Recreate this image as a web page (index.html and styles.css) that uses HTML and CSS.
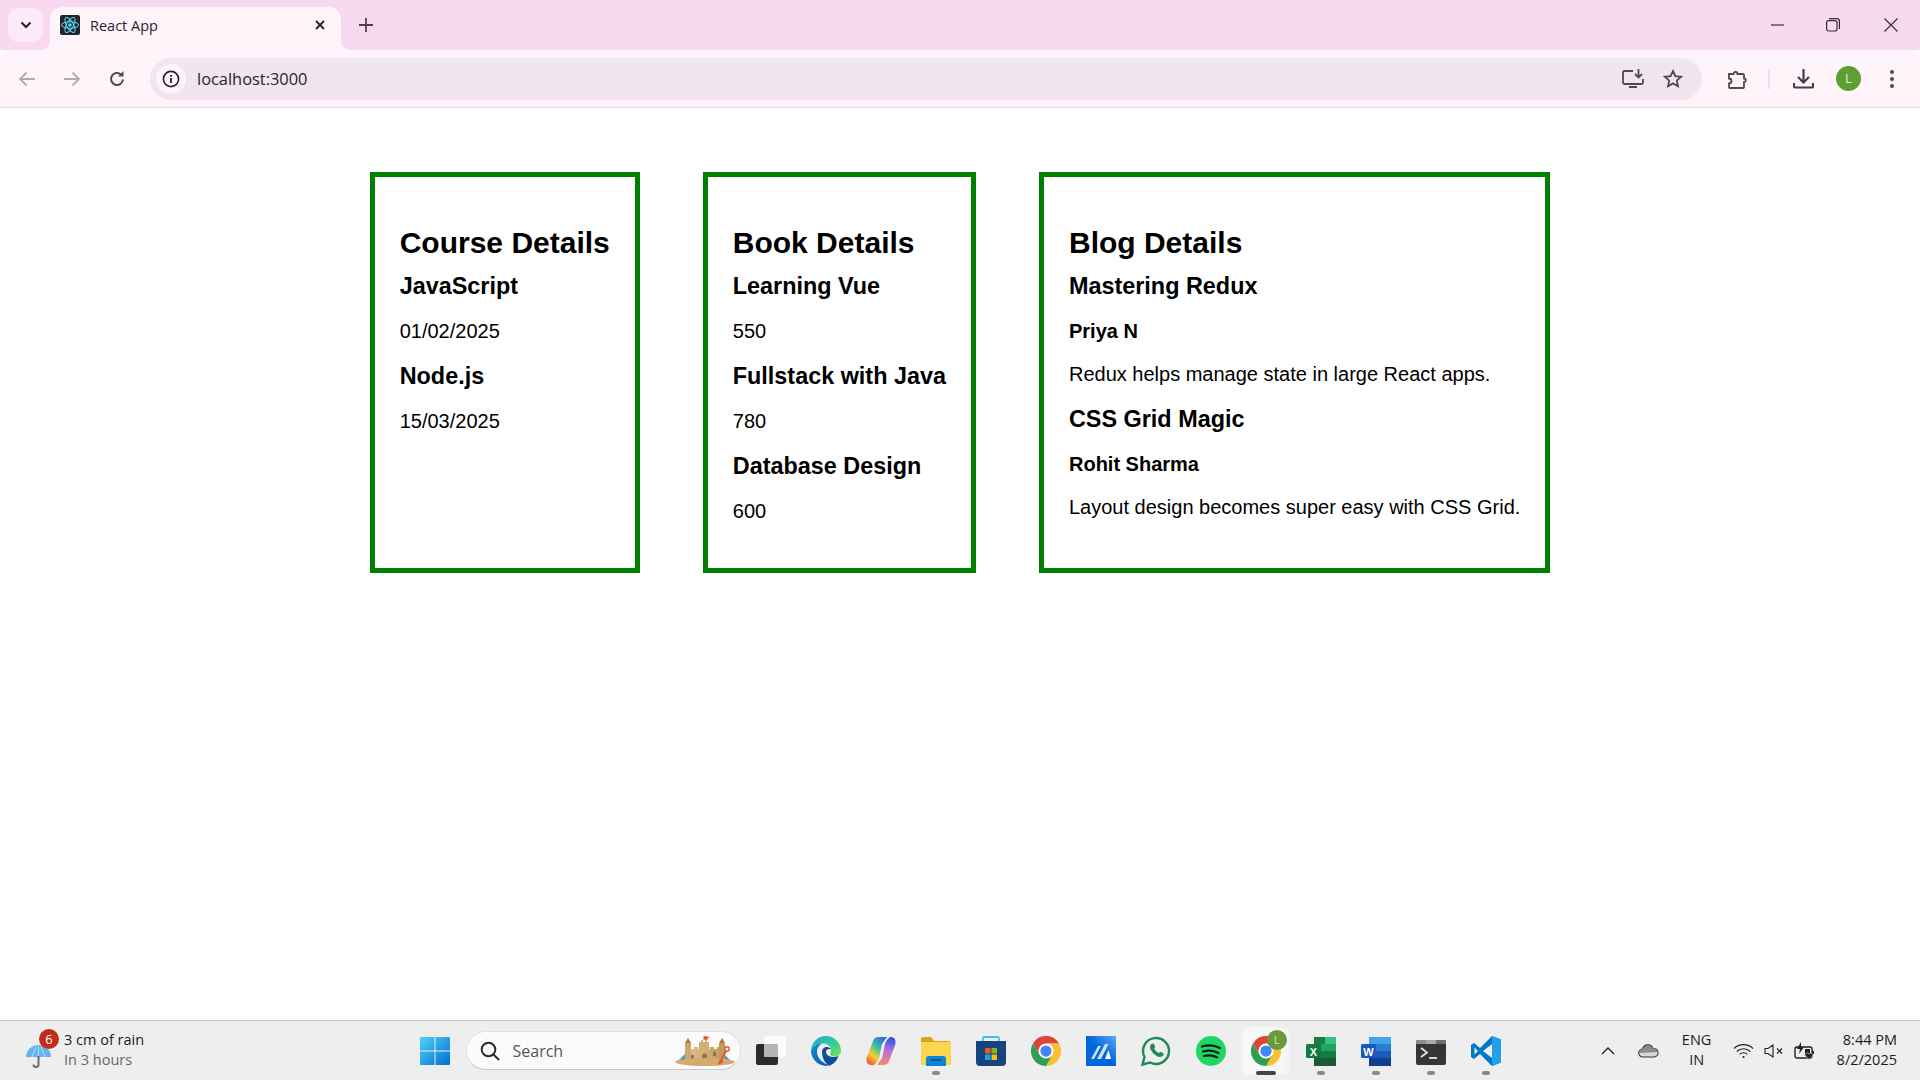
FILE: index.html

```html
<!DOCTYPE html>
<html lang="en">
<head>
  <meta charset="UTF-8" />
  <title>React App</title>
  <link rel="stylesheet" href="styles.css">
</head>
<body>
  <svg class="defs" width="0" height="0">
    <symbol id="chrome" viewBox="0 0 48 48">
      <path fill="#db4437" d="M3.2 12A24 24 0 0 1 44.8 12H24A12 12 0 0 0 13.6 30Z"/>
      <path fill="#fbc02d" d="M44.8 12A24 24 0 0 1 24 48L34.4 30A12 12 0 0 0 24 12Z"/>
      <path fill="#2e9e4f" d="M24 48A24 24 0 0 1 3.2 12L13.6 30A12 12 0 0 0 34.4 30Z"/>
      <circle cx="24" cy="24" r="11.5" fill="#fff"/>
      <circle cx="24" cy="24" r="9" fill="#4285f4"/>
    </symbol>
  </svg>

  <!-- tab strip -->
  <div class="tabstrip">
    <div class="tab-search">
      <svg width="12" height="8" viewBox="0 0 12 8"><path d="M1.5 1.5 6 6l4.500-4.500" fill="none" stroke="#2b1f29" stroke-width="2"/></svg>
    </div>
    <div class="tab">
      <svg class="favicon" width="20" height="20" viewBox="0 0 20 20">
        <rect width="20" height="20" rx="2" fill="#20252b"/>
        <g fill="none" stroke="#61dafb" stroke-width="1">
          <ellipse cx="10" cy="10" rx="8.500" ry="3.300"/>
          <ellipse cx="10" cy="10" rx="8.500" ry="3.300" transform="rotate(60 10 10)"/>
          <ellipse cx="10" cy="10" rx="8.500" ry="3.300" transform="rotate(120 10 10)"/>
        </g>
        <circle cx="10" cy="10" r="1.800" fill="#61dafb"/>
      </svg>
      <span class="tab-title">React App</span>
      <svg class="tab-close" width="10" height="10" viewBox="0 0 10 10"><path d="M1 1l8 8M9 1 1 9" stroke="#2b1f29" stroke-width="1.800"/></svg>
    </div>
    <svg class="new-tab" width="14" height="14" viewBox="0 0 14 14"><path d="M7 0v14M0 7h14" stroke="#4f3f4c" stroke-width="1.800"/></svg>
    <div class="window-btns">
      <svg width="14" height="14" viewBox="0 0 14 14"><path d="M0 7h13" stroke="#3a2d37" stroke-width="1.200"/></svg>
      <svg width="14" height="14" viewBox="0 0 14 14" fill="none" stroke="#3a2d37" stroke-width="1.200"><rect x="0.600" y="2.600" width="10.400" height="10.400" rx="2"/><path d="M3 .6h8a2.400 2.400 0 0 1 2.400 2.400v8"/></svg>
      <svg width="14" height="14" viewBox="0 0 14 14"><path d="M.5.500l13 13M13.500.500l-13 13" stroke="#3a2d37" stroke-width="1.200"/></svg>
    </div>
  </div>

  <!-- address bar -->
  <div class="toolbar">
    <svg class="nav" width="18" height="16" viewBox="0 0 18 16" fill="none" stroke="#b3a9b1" stroke-width="1.800"><path d="M17 8H2M8.500 1.500 2 8l6.500 6.500"/></svg>
    <svg class="nav" width="18" height="16" viewBox="0 0 18 16" fill="none" stroke="#b3a9b1" stroke-width="1.800"><path d="M1 8h15M9.500 1.500 16 8l-6.500 6.500"/></svg>
    <svg class="nav" width="18" height="18" viewBox="0 0 18 18" fill="none" stroke="#54454f" stroke-width="2.100"><path d="M15 9.500A6 6 0 1 1 13 4.500"/><path d="M15.500 1v5.500H10" fill="#54454f" stroke="none"/></svg>
    <div class="omnibox">
      <div class="site-info">
        <svg width="18" height="18" viewBox="0 0 18 18"><circle cx="9" cy="9" r="7.600" fill="none" stroke="#2b1f29" stroke-width="1.600"/><path d="M9 8v5M9 5v1.800" stroke="#2b1f29" stroke-width="1.800"/></svg>
      </div>
      <span class="url">localhost:3000</span>
      <svg class="omni-right" width="22" height="20" viewBox="0 0 22 20" fill="none" stroke="#54454f" stroke-width="1.800"><path d="M11 2H2.500a1.500 1.500 0 0 0-1.500 1.500v10a1.500 1.500 0 0 0 1.500 1.500h17a1.500 1.500 0 0 0 1.500-1.500V10"/><path d="M16.500 0v8M13 5l3.500 3.500L20 5M7 18h8" /></svg>
      <svg class="omni-star" width="20" height="19" viewBox="0 0 20 19" fill="none" stroke="#54454f" stroke-width="1.800"><path d="M10 2l2.400 5.200 5.600.6-4.200 3.800 1.200 5.600L10 14.400l-5 2.800 1.200-5.600L2 7.800l5.600-.6z"/></svg>
    </div>
    <svg class="ext" width="20" height="20" viewBox="0 0 20 20" fill="none" stroke="#54454f" stroke-width="1.800"><path d="M2 5h4.500a2 2 0 0 1 4 0H16a1 1 0 0 1 1 1v3.500a1.800 1.800 0 0 1 0 3.600V18a1 1 0 0 1-1 1H3a1 1 0 0 1-1-1v-3.500a2.500 2.500 0 0 0 0-5z"/></svg>
    <span class="divider"></span>
    <svg class="dl" width="21" height="20" viewBox="0 0 21 20" fill="none" stroke="#4a3a46" stroke-width="2.200"><path d="M10.500 0v13M5 8l5.500 5.500L16 8M1 14v3.500a1 1 0 0 0 1 1h17a1 1 0 0 0 1-1V14"/></svg>
    <div class="avatar">L</div>
    <div class="menu-dots"><i></i><i></i><i></i></div>
  </div>

  <!-- page content -->
  <main class="page">
    <section class="card">
      <h2>Course Details</h2>
      <h3>JavaScript</h3>
      <p>01/02/2025</p>
      <h3>Node.js</h3>
      <p>15/03/2025</p>
    </section>
    <section class="card">
      <h2>Book Details</h2>
      <h3>Learning Vue</h3>
      <p>550</p>
      <h3>Fullstack with Java</h3>
      <p>780</p>
      <h3>Database Design</h3>
      <p>600</p>
    </section>
    <section class="card">
      <h2>Blog Details</h2>
      <h3>Mastering Redux</h3>
      <h4>Priya N</h4>
      <p>Redux helps manage state in large React apps.</p>
      <h3>CSS Grid Magic</h3>
      <h4>Rohit Sharma</h4>
      <p>Layout design becomes super easy with CSS Grid.</p>
    </section>
  </main>

  <!-- windows taskbar -->
  <footer class="taskbar">
    <div class="weather">
      <div class="weather-icon">
        <svg width="25" height="23" viewBox="0 0 25 23"><path d="M0 12A12.500 12 0 0 1 25 12Z" fill="#63b4ee"/><path d="M6 12 10 2M19 12 15 2M12.500 1v11" stroke="#cfe8fa" stroke-width=".8"/><path d="M12.500 11v8.500a2.500 2.500 0 0 1-5 0" fill="none" stroke="#6d6d6d" stroke-width="2"/></svg>
        <span class="badge">6</span>
      </div>
      <div class="weather-text">
        <div>3 cm of rain</div>
        <div class="muted">In 3 hours</div>
      </div>
    </div>

    <div class="task-icons">
      <svg class="ico win" viewBox="0 0 30 30">
        <defs><linearGradient id="wg" x1="0" y1="0" x2="1" y2="1"><stop offset="0" stop-color="#4fd0fb"/><stop offset="1" stop-color="#0070d0"/></linearGradient></defs>
        <path fill="url(#wg)" d="M1 1h13.500v13.500H0V2a1 1 0 0 1 1-1zM15.500 1H29a1 1 0 0 1 1 1v12.500H15.500zM0 15.500h14.500V29H1a1 1 0 0 1-1-1zM15.500 15.500H30V28a1 1 0 0 1-1 1H15.500z"/>
      </svg>

      <div class="search">
        <svg width="20" height="20" viewBox="0 0 20 20" fill="none" stroke="#2a2a2a" stroke-width="2"><circle cx="8.500" cy="8.500" r="6.800"/><path d="M13.500 13.500 19 19"/></svg>
        <span class="search-text">Search</span>
        <svg class="castle" width="60" height="30" viewBox="0 0 60 30">
          <defs><linearGradient id="sand" x1="0" y1="0" x2="1" y2="0"><stop offset="0" stop-color="#e0c28c"/><stop offset="1" stop-color="#c39a5c"/></linearGradient></defs>
          <path d="M3 25 11 17v9z" fill="#3d9bd8"/>
          <path d="M50 19l8 8H48z" fill="#3d9bd8"/>
          <path d="M12 11h4v2h3v-2h4v2h12v-2h4v2h3v-2h4v15H12z" fill="url(#sand)"/>
          <rect x="10" y="7" width="6" height="18" fill="#cda76b"/>
          <rect x="44" y="7" width="6" height="18" fill="#c39a5c"/>
          <path d="M10 7l3-5 3 5zM44 7l3-5 3 5z" fill="#a97f45"/>
          <path d="M24 6h2V4h2v2h2V4h2v2h2v9H24z" fill="#d3ae74"/>
          <path d="M29 4V0" stroke="#a0764a"/>
          <path d="M29 0 35 1 32 2.500 33 4 29 3.500z" fill="#e2542f"/>
          <path d="M27 24v-4a2.500 2.500 0 0 1 5 0v4z" fill="#8d7356"/>
          <path d="M16 20a1.500 1.500 0 0 1 3 0v3h-3z" fill="#8d7356"/>
          <path d="M38 17a1.500 1.500 0 0 1 3 0v3h-3z" fill="#8d7356"/>
          <ellipse cx="30" cy="26" rx="30" ry="4" fill="#d4ab6c"/>
          <path d="M44 28 51 15" stroke="#e2542f" stroke-width="1.800"/>
          <circle cx="52" cy="13" r="2.200" fill="none" stroke="#e2542f" stroke-width="1.400"/>
          <path d="M43 29l2-6 4 3z" fill="#e2542f"/>
        </svg>
      </div>

      <svg class="ico taskview" viewBox="0 0 30 30">
        <rect x="0" y="8" width="22" height="21" rx="2" fill="#2b2b2b"/>
        <rect x="8" y="0" width="22" height="21" rx="2" fill="#fdfdfd" fill-opacity=".9"/>
        <rect x="8" y="8" width="14" height="13" rx="1" fill="#b5b5b5"/>
      </svg>

      <svg class="ico" viewBox="0 0 30 30">
        <defs>
          <linearGradient id="eg1" x1="0" y1="0" x2="1" y2="1"><stop offset="0" stop-color="#1fa7d8"/><stop offset=".6" stop-color="#3ccf8e"/><stop offset="1" stop-color="#7ee05a"/></linearGradient>
          <linearGradient id="eg2" x1="0" y1="0" x2="1" y2="1"><stop offset="0" stop-color="#0f8fd8"/><stop offset="1" stop-color="#0b5aa8"/></linearGradient>
        </defs>
        <path fill="url(#eg1)" d="M15 0a15 15 0 0 1 15 15c0 4-3 5.500-6.500 5.500-3 0-4.500-1-4.500-2.500 0-1 1-1.500 1-3.500C20 10 16 7.500 12 7.500 6 7.500 1 11 0 15A15 15 0 0 1 15 0z"/>
        <path fill="url(#eg2)" d="M0 15c1-4 6-7.500 11-7.500-3 1.500-5 4.500-5 8 0 6 5 12 13 13.700A15 15 0 0 1 0 15z"/>
        <path fill="#0c4f96" d="M11 16c0-3 2-5 5-5 2 0 3 1 4 2-3-.5-5 .5-5 3 0 3 4 5 8 5 1.500 0 3-.3 4.500-1A15 15 0 0 1 19 29.400C14 28 11 22 11 16z"/>
      </svg>

      <svg class="ico" viewBox="0 0 30 30">
        <defs>
          <linearGradient id="cg1" x1=".8" y1="0" x2=".2" y2="1"><stop offset="0" stop-color="#2a6fe0"/><stop offset=".4" stop-color="#3fc0a0"/><stop offset=".7" stop-color="#f5d130"/><stop offset="1" stop-color="#f0553a"/></linearGradient>
          <linearGradient id="cg2" x1=".6" y1="0" x2=".4" y2="1"><stop offset="0" stop-color="#2a55e0"/><stop offset=".45" stop-color="#b86ae0"/><stop offset="1" stop-color="#f58a70"/></linearGradient>
        </defs>
        <path fill="url(#cg1)" d="M7 5Q8 1 13 1H21L16 8 13 22Q11 27 8 29H5Q0 29 .5 22Z"/>
        <path fill="url(#cg2)" d="M23 25Q22 29 17 29H11L16 22 19 8Q21 3 24 1H25Q30 1 29.500 8Z"/>
      </svg>

      <div class="run">
        <svg class="ico" viewBox="0 0 30 30">
          <path d="M0 3a2 2 0 0 1 2-2h8l3 4h15a2 2 0 0 1 2 2v3H0z" fill="#d9a31e"/>
          <path d="M0 6h30v22a1 1 0 0 1-1 1H1a1 1 0 0 1-1-1z" fill="#fcd64f"/>
          <path d="M5 30V23a3 3 0 0 1 3-3h14a3 3 0 0 1 3 3v7z" fill="#0f83d2"/>
          <path d="M10 24h10" stroke="#0a4c8c" stroke-width="1.500"/>
        </svg>
      </div>

      <svg class="ico" viewBox="0 0 30 30">
        <path d="M7 6V2.500A1.500 1.500 0 0 1 8.500 1h13A1.500 1.500 0 0 1 23 2.500V6" fill="none" stroke="#36c5f0" stroke-width="1.800"/>
        <path d="M0 5h30v21a4 4 0 0 1-4 4H4a4 4 0 0 1-4-4z" fill="#17447c"/>
        <rect x="9" y="12" width="5.500" height="5.500" fill="#f0562a"/>
        <rect x="15.500" y="12" width="5.500" height="5.500" fill="#7cb82a"/>
        <rect x="9" y="18.500" width="5.500" height="5.500" fill="#10a4ee"/>
        <rect x="15.500" y="18.500" width="5.500" height="5.500" fill="#fdb913"/>
      </svg>

      <svg class="ico"><use href="#chrome"/></svg>

      <svg class="ico" viewBox="0 0 30 30">
        <defs><linearGradient id="mg" x1="0" y1="1" x2="1" y2="0"><stop offset=".5" stop-color="#0068dc"/><stop offset="1" stop-color="#5aa8f5"/></linearGradient></defs>
        <rect width="30" height="30" fill="url(#mg)"/>
        <path d="M5 23 12 10h3L8 23zM11 23 19 8h3.500L15 23z" fill="#cfe0fa"/>
        <path d="M19 23l3.500-9 2.500 9z" fill="#fff"/>
      </svg>

      <svg class="ico" viewBox="0 0 30 30">
        <path d="M1.500 28.500 3.500 21A13 13 0 1 1 9 26.500z" fill="none" stroke="#1f8a58" stroke-width="2.400"/>
        <path d="M10.500 8c1-.8 2-.8 2.400 0l1.200 2.600c.2.500 0 1-.9 1.900 1 2 2.500 3.500 4.500 4.500 1-.9 1.500-1.200 2-1l2.500 1.300c.8.400.7 1.400 0 2.300-1 1.300-3 1.800-5.500.8-3.500-1.400-6-4-7.300-7.300-.8-2.200-.2-3.900.8-5.100z" fill="#1f8a58"/>
      </svg>

      <svg class="ico" viewBox="0 0 30 30">
        <circle cx="15" cy="15" r="15" fill="#1ed760"/>
        <path d="M6 10.500c6-1.800 12.500-1.300 18 1.500M7 15.500c5.500-1.500 11-1 15.500 1.500M8 20c4.500-1.200 9-.8 13 1.200" fill="none" stroke="#1c1c1c" stroke-width="2.300" stroke-linecap="round"/>
      </svg>

      <div class="active-app">
        <svg class="ico"><use href="#chrome"/></svg>
        <span class="app-avatar">L</span>
      </div>

      <div class="run">
        <svg class="ico" viewBox="0 0 30 30">
          <path d="M8 1h20a2 2 0 0 1 2 2v25a2 2 0 0 1-2 2H10a2 2 0 0 1-2-2z" fill="#1f7a4a"/>
          <rect x="19" y="1" width="11" height="7" fill="#33c481"/>
          <rect x="8" y="8" width="11" height="7" fill="#21a366"/>
          <rect x="19" y="8" width="11" height="7" fill="#21a366"/>
          <rect x="19" y="15" width="11" height="7" fill="#107c41"/>
          <rect x="8" y="22" width="22" height="8" fill="#185c37"/>
          <rect x="0" y="8" width="15" height="14" rx="1.500" fill="#107c41"/>
          <text x="7.500" y="19.500" class="ico-letter" text-anchor="middle">X</text>
        </svg>
      </div>

      <div class="run">
        <svg class="ico" viewBox="0 0 30 30">
          <path d="M8 1h20a2 2 0 0 1 2 2v25a2 2 0 0 1-2 2H10a2 2 0 0 1-2-2z" fill="#185abd"/>
          <rect x="8" y="1" width="22" height="7" rx="1" fill="#41a5ee"/>
          <rect x="8" y="8" width="22" height="7" fill="#2b7cd3"/>
          <rect x="8" y="22" width="22" height="8" fill="#103f91"/>
          <rect x="0" y="8" width="15" height="14" rx="1.500" fill="#185abd"/>
          <text x="7.500" y="19.500" class="ico-letter" text-anchor="middle">W</text>
        </svg>
      </div>

      <div class="run">
        <svg class="ico" viewBox="0 0 30 30">
          <path d="M2 4h26a2 2 0 0 1 2 2v21a2 2 0 0 1-2 2H2a2 2 0 0 1-2-2V6a2 2 0 0 1 2-2z" fill="#353535"/>
          <path d="M0 8V6a2 2 0 0 1 2-2h8v4z" fill="#8b8b8b"/>
          <rect x="10" y="4" width="10" height="4" fill="#a8a8a8"/>
          <path d="M20 4h8a2 2 0 0 1 2 2v2H20z" fill="#6e6e6e"/>
          <path d="M5 12l6 4.500-6 4.500" fill="none" stroke="#e6e6e6" stroke-width="1.800"/>
          <path d="M13 22h8" stroke="#e6e6e6" stroke-width="1.800"/>
        </svg>
      </div>

      <div class="run">
        <svg class="ico" viewBox="0 0 30 30">
          <path d="M21 0l9 3.500v23L21 30 9 18 3 23l-3-2v-12l3-2 6 5z" fill="#0078c8"/>
          <path d="M21 0l9 3.500v23L21 30z" fill="#21a0ee"/>
          <path d="M21 8 12 15l9 7z" fill="#eeeeee"/>
          <path d="M3.500 11.500 7 15l-3.500 3.500z" fill="#eeeeee"/>
        </svg>
      </div>
    </div>

    <div class="tray">
      <svg class="tray-chevron" width="14" height="8" viewBox="0 0 14 8"><path d="M1 7l6-6 6 6" fill="none" stroke="#222" stroke-width="1.400"/></svg>
      <svg class="tray-cloud" width="21" height="14" viewBox="0 0 21 14"><path d="M5 13a4 4 0 0 1-.5-8A5.500 5.500 0 0 1 15 4.500 4.300 4.300 0 0 1 16.500 13z" fill="#d8d8d8" stroke="#333" stroke-width="1.100"/><path d="M1.500 9A4 4 0 0 1 5 5 5.500 5.500 0 0 1 15 4.500 4 4 0 0 1 19.500 8z" fill="#8c8c8c"/></svg>
      <div class="lang">ENG<br>IN</div>
      <svg class="tray-wifi" width="21" height="16" viewBox="0 0 21 16" fill="none" stroke="#222" stroke-width="1.100"><path d="M1 5.500a13.500 13.500 0 0 1 19 0M3.800 8.500a9.500 9.500 0 0 1 13.400 0M6.600 11.300a5.500 5.500 0 0 1 7.800 0"/><circle cx="10.500" cy="14" r="1.100" fill="#222" stroke="none"/></svg>
      <svg class="tray-sound" width="20" height="14" viewBox="0 0 20 14" fill="none" stroke="#222" stroke-width="1.100"><path d="M1 4.500h3L9 1v12L4 9.500H1zM13 4.500l5 5M18 4.500l-5 5"/></svg>
      <svg class="tray-batt" width="21" height="18" viewBox="0 0 21 18"><path d="M3 5h13a2 2 0 0 1 2 2v7a2 2 0 0 1-2 2H3a2 2 0 0 1-2-2V7a2 2 0 0 1 2-2z" fill="none" stroke="#222" stroke-width="1.400"/><path d="M7 0 3 7h3l-1 5 5-7H7z" fill="#222"/><path d="M11 7h5v7h-5zM18 9h2v3h-2z" fill="#222"/><path d="M15 17.500l-3.500-3.500a2 2 0 0 1 3.500-2 2 2 0 0 1 3.500 2z" fill="#222" stroke="#eee" stroke-width=".6"/></svg>
      <div class="clock">8:44 PM<br>8/2/2025</div>
    </div>
  </footer>
</body>
</html>
```

FILE: styles.css

```css
* {
  box-sizing: border-box;
}
html, body {
  margin: 0;
  height: 100%;
  overflow: hidden;
}
body {
  display: flex;
  flex-direction: column;
  background: #fff;
  font-family: "Liberation Sans", Arial, sans-serif;
}
svg {
  display: block;
  flex: none;
}
.defs {
  position: absolute;
}

/* tab strip */
.tabstrip {
  height: 50px;
  background: #f8d9f0;
  display: flex;
  align-items: flex-end;
  padding-left: 8px;
  position: relative;
}
.tab-search {
  width: 35px;
  height: 34px;
  margin-bottom: 8px;
  border-radius: 10px;
  background: #fcebf7;
  display: flex;
  align-items: center;
  justify-content: center;
}
.tab {
  width: 291px;
  height: 43px;
  margin-left: 7px;
  background: #fef4fa;
  border-radius: 12px 12px 0 0;
  display: flex;
  align-items: center;
  padding: 0 16px 7px 10px;
  position: relative;
}
.tab::before, .tab::after {
  content: "";
  position: absolute;
  bottom: 0;
  width: 10px;
  height: 10px;
}
.tab::before {
  left: -10px;
  background: radial-gradient(circle at 0 0, transparent 10px, #fef4fa 10.500px);
}
.tab::after {
  right: -10px;
  background: radial-gradient(circle at 100% 0, transparent 10px, #fef4fa 10.500px);
}
.tab-title {
  margin-left: 10px;
  flex: 1;
  font: 14.500px "Open Sans", sans-serif;
  color: #2b1f29;
}
.new-tab {
  margin: 0 0 18px 18px;
}
.window-btns {
  margin-left: auto;
  margin-bottom: 18px;
  display: flex;
  gap: 44px;
  padding-right: 22px;
}
.window-btns svg:first-child {
  margin-right: -3px;
}

/* toolbar */
.toolbar {
  height: 58px;
  background: #fef4fa;
  border-bottom: 1px solid #ecd9e6;
  border-radius: 10px 10px 0 0;
  display: flex;
  align-items: center;
  padding-left: 18px;
}
.nav {
  margin-right: 27px;
}
.omnibox {
  width: 1552px;
  height: 42px;
  margin-left: -3px;
  border-radius: 21px;
  background: #f1e5ef;
  display: flex;
  align-items: center;
  padding-left: 6px;
}
.site-info {
  width: 30px;
  height: 30px;
  border-radius: 50%;
  background: #fef4fa;
  display: flex;
  align-items: center;
  justify-content: center;
}
.url {
  margin-left: 11px;
  flex: 1;
  font: 16.400px "Open Sans", sans-serif;
  color: #2b1f29;
}
.omni-right {
  margin-right: 19px;
}
.omni-star {
  margin-right: 19px;
}
.ext {
  margin-left: 25px;
}
.divider {
  width: 2px;
  height: 20px;
  margin-left: 21px;
  background: #f8d9f0;
}
.dl {
  margin-left: 23px;
}
.avatar {
  width: 25px;
  height: 25px;
  margin-left: 22px;
  border-radius: 50%;
  background: #5e9e32;
  color: #e3f0d8;
  font: 13px/25px "Open Sans", sans-serif;
  text-align: center;
}
.menu-dots {
  margin-left: 29px;
  display: flex;
  flex-direction: column;
  gap: 3px;
}
.menu-dots i {
  width: 4px;
  height: 4px;
  border-radius: 50%;
  background: #54454f;
}

/* page */
.page {
  flex: 1;
  display: flex;
  justify-content: center;
  align-items: flex-start;
  gap: 63px;
  padding-top: 64px;
  color: #000;
}
.card {
  border: 5px solid green;
  padding: 25px;
  height: 401px;
}
.card h2 {
  font-size: 30px;
  margin: 24px 0 12.500px;
}
.card h3 {
  font-size: 23.400px;
  margin: 0 0 20px;
}
.card h4 {
  font-size: 20px;
  margin: 0 0 20px;
}
.card p {
  font-size: 20px;
  margin: 0 0 20px;
}

/* taskbar */
.taskbar {
  height: 60px;
  background: #eeeeee;
  border-top: 1px solid #c4c4c4;
  display: grid;
  grid-template-columns: 1fr auto 1fr;
  align-items: center;
  font-family: "Open Sans", sans-serif;
  color: #1c1c1c;
}
.weather {
  display: flex;
  align-items: center;
  padding-left: 26px;
}
.weather-icon {
  position: relative;
  margin-top: 12px;
}
.badge {
  position: absolute;
  left: 13px;
  top: -16px;
  width: 20px;
  height: 20px;
  border-radius: 50%;
  background: #c42b1c;
  color: #fff;
  font-size: 13px;
  line-height: 20px;
  text-align: center;
}
.weather-text {
  margin-left: 13px;
  padding-bottom: 2px;
  font-size: 14.500px;
  line-height: 20px;
}
.muted {
  color: #666;
}
.task-icons {
  display: flex;
  align-items: center;
  gap: 25px;
}
.ico {
  width: 30px;
  height: 30px;
  overflow: visible;
}
.win {
  margin-right: -9px;
}
.search {
  width: 275px;
  height: 39px;
  border-radius: 20px;
  background: #fbfbfb;
  border: 1px solid #e2e2e2;
  border-bottom-color: #c8c8c8;
  display: flex;
  align-items: center;
  padding-left: 13px;
  position: relative;
}
.search-text {
  margin-left: 13px;
  font-size: 16px;
  color: #555;
}
.castle {
  position: absolute;
  right: 5px;
  top: 4px;
  overflow: visible;
}
.taskview {
  margin-left: -10px;
}
.run {
  position: relative;
}
.run::after {
  content: "";
  position: absolute;
  left: 11px;
  bottom: -9px;
  width: 8px;
  height: 4px;
  border-radius: 2px;
  background: #8a8a8a;
}
.ico-letter {
  font: bold 11px "Liberation Sans", sans-serif;
  fill: #fff;
}
.active-app {
  position: relative;
}
.active-app::before {
  content: "";
  position: absolute;
  left: -9px;
  top: -9px;
  width: 43px;
  height: 48px;
  border-radius: 5px;
  background: #f7f7f7;
  box-shadow: 5px 0 0 -1px #f4f4f4;
}
.active-app::after {
  content: "";
  position: absolute;
  left: 5px;
  bottom: -9px;
  width: 20px;
  height: 4px;
  border-radius: 2px;
  background: #444;
}
.active-app .ico {
  position: relative;
}
.app-avatar {
  position: absolute;
  left: 16px;
  top: -6px;
  width: 20px;
  height: 20px;
  border-radius: 50%;
  background: #6a9a3c;
  color: #d7e6c6;
  font-size: 11px;
  line-height: 20px;
  text-align: center;
}
.tray {
  display: flex;
  align-items: center;
  justify-content: flex-end;
  padding-right: 23px;
}
.tray-cloud {
  margin-left: 23px;
}
.lang {
  width: 40px;
  margin-left: 18px;
  padding-bottom: 2px;
  font-size: 14.500px;
  line-height: 20px;
  text-align: center;
}
.tray-wifi {
  margin-left: 16px;
}
.tray-sound {
  margin-left: 10px;
}
.tray-batt {
  margin-left: 10px;
}
.clock {
  margin-left: 22px;
  padding-bottom: 2px;
  font-size: 14.500px;
  line-height: 20px;
  text-align: right;
}
```
